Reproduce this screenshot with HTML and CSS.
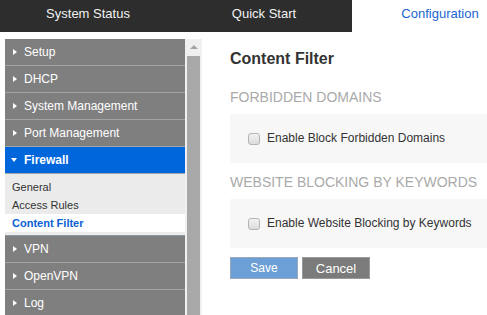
FILE: index.html
```html
<!DOCTYPE html>
<html lang="en">
<head>
    <meta charset="UTF-8">
    <meta name="viewport" content="width=device-width, initial-scale=1.0">
    <title>Content Filter</title>
    <link rel="stylesheet" href="styles.css">
</head>
<body>
    <!-- Top navigation -->
    <div class="topnav">
        <a href="#" class="tab">System Status</a>
        <a href="#" class="tab">Quick Start</a>
        <a href="#" class="tab active">Configuration</a>
    </div>

    <div class="layout">
        <div class="sidebar">
            <ul class="menu">
                <li class="item">Setup</li>
                <li class="item">DHCP</li>
                <li class="item">System Management</li>
                <li class="item">Port Management</li>
                <li class="item open">Firewall</li>
                <li class="submenu">
                    <a href="#">General</a>
                    <a href="#">Access Rules</a>
                    <a href="#" class="current">Content Filter</a>
                </li>
                <li class="item first">VPN</li>
                <li class="item">OpenVPN</li>
                <li class="item">Log</li>
            </ul>
            <div class="scrollbar">
                <span class="arrow"></span>
                <span class="thumb"></span>
            </div>
        </div>

        <div class="content">
            <h1>Content Filter</h1>

            <h2>Forbidden Domains</h2>
            <div class="panel">
                <label><input type="checkbox"> Enable Block Forbidden Domains</label>
            </div>

            <h2 class="tight">Website Blocking by Keywords</h2>
            <div class="panel">
                <label><input type="checkbox"> Enable Website Blocking by Keywords</label>
            </div>

            <div class="actions">
                <button class="save">Save</button>
                <button class="cancel">Cancel</button>
            </div>
        </div>
    </div>
</body>
</html>
```

FILE: styles.css
```css
body {
    font-family: "Liberation Sans", Arial, sans-serif;
    margin: 0;
    background: #ffffff;
    color: #333;
    overflow: hidden;
    height: 100vh;
}
.topnav {
    display: flex;
    height: 32px;
    background: #2d2d2d;
    overflow: hidden;
}
.tab {
    flex: 0 0 176px;
    text-align: center;
    line-height: 28px;
    font-size: 13px;
    color: #f2f2f2;
    text-decoration: none;
}
.tab.active {
    background: #ffffff;
    color: #1a66d2;
}

.layout {
    display: flex;
    height: calc(100vh - 32px);
}

/* Left menu */
.sidebar {
    display: flex;
    margin: 7px 0 0 5px;
    flex: 0 0 197px;
}
.menu {
    list-style: none;
    margin: 0;
    padding: 0;
    width: 180px;
    background: #7f7f7f;
}
.item {
    position: relative;
    height: 26px;
    line-height: 26px;
    padding-left: 19px;
    font-size: 12px;
    color: #ffffff;
    border-bottom: 1px solid #a4a4a4;
}
.item::before {
    content: "";
    position: absolute;
    left: 8px;
    top: 10px;
    border-left: 4px solid #ffffff;
    border-top: 3px solid transparent;
    border-bottom: 3px solid transparent;
}
.item.open {
    background: #0066dc;
    font-weight: bold;
}
.item.open::before {
    left: 6px;
    top: 11px;
    border-top: 4px solid #ffffff;
    border-left: 3px solid transparent;
    border-right: 3px solid transparent;
    border-bottom: none;
}
.item.first {
    border-top: 1px solid #8f98a0;
}
.submenu {
    background: #ebebeb;
    padding: 4px 0 3px;
}
.submenu a {
    display: block;
    height: 18px;
    line-height: 18px;
    padding-left: 7px;
    font-size: 11px;
    color: #333;
    text-decoration: none;
}
.submenu a.current {
    background: #ffffff;
    color: #0a5fd4;
    font-weight: bold;
}

.scrollbar {
    position: relative;
    width: 17px;
    background: #f0f0f0;
}
.arrow {
    position: absolute;
    left: 5px;
    top: 6px;
    border-bottom: 4px solid #a3a3a3;
    border-left: 4px solid transparent;
    border-right: 4px solid transparent;
}
.thumb {
    position: absolute;
    left: 2px;
    right: 2px;
    top: 17px;
    bottom: 0;
    background: #a8a8a8;
}

/* Main content */
.content {
    flex: 1;
    min-width: 0;
    overflow: hidden;
    padding: 17px 0 0 28px;
    white-space: nowrap;
}
h1 {
    margin: 0 0 19px;
    font-size: 16px;
    line-height: 20px;
}
h2 {
    margin: 0 0 8px;
    font-size: 14px;
    line-height: 18px;
    font-weight: normal;
    text-transform: uppercase;
    color: #aaaaaa;
}
.panel {
    background: #f7f7f7;
    padding: 17px 0 17px 18px;
    height: 15px;
    margin-bottom: 10px;
}
.panel label {
    display: flex;
    align-items: center;
    gap: 7px;
    font-size: 12px;
    line-height: 15px;
    color: #333;
}
.panel input {
    appearance: none;
    margin: 0;
    width: 12px;
    height: 12px;
    border: 1px solid #b4b4b4;
    border-radius: 3px;
    background: linear-gradient(#f2f2f2, #dcdcdc);
}
.actions {
    display: flex;
    gap: 4px;
    margin-top: -1px;
}
button {
    width: 68px;
    height: 22px;
    border: 1px solid #9aa8b8;
    font-family: inherit;
    font-size: 12px;
    color: #ffffff;
    padding: 0;
}
.save {
    background: #6c9fd5;
}
.cancel {
    background: #7b7b7b;
    border-color: #9a9a9a;
    font-size: 13px;
}
```
